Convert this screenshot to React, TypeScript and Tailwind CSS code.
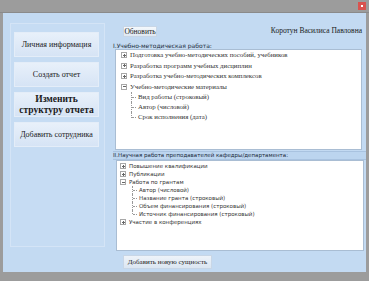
import React from 'react'

const serif = { fontFamily: '"Liberation Serif", "Times New Roman", serif' }
const sans = { fontFamily: '"DejaVu Sans", "Liberation Sans", sans-serif' }

const Expander = ({ open }: { open?: boolean }) => (
    <span className="w-[6px] h-[6px] border border-[#a8a8a8] bg-white flex items-center justify-center shrink-0 relative">
        <span className="absolute w-[3px] h-px bg-[#666]" />
        {!open && <span className="absolute w-px h-[3px] bg-[#666]" />}
    </span>
)

const Node = ({ label, open, h }: { label: string; open?: boolean; h: string }) => (
    <div className={`flex items-center gap-[3px] ${h}`}>
        <Expander open={open} />
        <span className="whitespace-nowrap">{label}</span>
    </div>
)

const Leaf = ({ label, h, last }: { label: string; h: string; last?: boolean }) => (
    <div className={`flex items-center ${h}`}>
        <span className={`w-px self-stretch border-l border-dotted border-[#999] ${last ? 'mb-[4px]' : ''}`} />
        <span className="w-[4px] border-t border-dotted border-[#999] mr-[2px]" />
        <span className="whitespace-nowrap">{label}</span>
    </div>
)

const SideButton = ({ children, big }: { children: React.ReactNode; big?: boolean }) => (
    <div
        className={`h-[25px] flex items-center justify-center text-center bg-gradient-to-b from-[#e8f0fa] to-[#d6e4f5] border border-[#e4edf8] text-[#1a1a1a] ${big ? 'text-[9.5px] font-bold leading-[11px]' : 'text-[8px]'}`}
        style={serif}
    >
        {children}
    </div>
)

const App = () => {
    return (
        <div className="w-[369px] h-[281px] bg-[#9c9c9c] flex flex-col overflow-hidden">
            {/* title bar */}
            <div className="h-[13px] flex justify-end items-start pr-[3px] pt-[2px] shrink-0 border-b border-[#8a8a8a]">
                <div className="w-[8px] h-[8px] bg-[#d9534f] flex items-center justify-center">
                    <span className="w-[2px] h-[2px] bg-white" />
                </div>
            </div>

            <div className="flex-1 flex ml-[3px] mr-[3px] mb-[9px] bg-[#c3daf2]">
                {/* left panel */}
                <div className="w-[95px] h-[224px] mt-[10px] ml-[7px] pl-[3px] pr-[5px] pt-[8px] bg-[#c6dcf3] border border-[#d4e4f6] flex flex-col gap-[5px] shrink-0">
                    <SideButton>Личная информация</SideButton>
                    <SideButton>Создать отчет</SideButton>
                    <SideButton big>Изменить<br />структуру отчета</SideButton>
                    <SideButton>Добавить сотрудника</SideButton>
                </div>

                {/* right side */}
                <div className="flex-1 flex flex-col ml-[8px] pt-[13px]">
                    <div className="flex items-start justify-between h-[16px]">
                        <div
                            className="ml-[10px] w-[34px] h-[11px] bg-gradient-to-b from-[#f4f8fc] to-[#dfe8f2] border border-[#c8d6e6] text-[7.5px] flex items-center justify-center text-[#1a1a1a]"
                            style={serif}
                        >
                            Обновить
                        </div>
                        <div className="text-[7.5px] text-[#1a1a1a] mr-[4px] -mt-[1px]" style={serif}>
                            Коротун Василиса Павловна
                        </div>
                    </div>
                    <div className="text-[6px] leading-[7px] h-[7px] text-[#1a2a3a]" style={sans}>
                        I.Учебно-методическая работа:
                    </div>
                    <div
                        className="ml-[2px] mr-[4px] h-[101px] bg-white border border-[#a9bdd3] pl-[5px] pt-0 text-[6.8px] text-[#333] overflow-hidden"
                        style={serif}
                    >
                        <Node h="h-[10.5px]" label="Подготовка учебно-методических пособий, учебников" />
                        <Node h="h-[10.5px]" label="Разработка программ учебных дисциплин" />
                        <Node h="h-[10.5px]" label="Разработка учебно-методических комплексов" />
                        <Node h="h-[10.5px]" open label="Учебно-методические материалы" />
                        <div className="pl-[10px]">
                            <Leaf h="h-[10px]" label="Вид работы (строковый)" />
                            <Leaf h="h-[10px]" label="Автор (числовой)" />
                            <Leaf h="h-[10px]" last label="Срок исполнения (дата)" />
                        </div>
                    </div>
                    <div
                        className="mt-[1px] h-[9px] border-y border-[#a9c3e0] bg-[#bcd5ef] text-[5.5px] leading-[7px] text-[#1a2a3a] whitespace-nowrap"
                        style={sans}
                    >
                        II.Научная работа преподавателей кафедры/департамента:
                    </div>
                    <div
                        className="ml-[3px] mr-[2px] h-[91px] bg-white border border-[#a9bdd3] pl-[3px] pt-[1px] text-[5.5px] text-[#333] overflow-hidden"
                        style={sans}
                    >
                        <Node h="h-[8px]" label="Повышение квалификации" />
                        <Node h="h-[8px]" label="Публикации" />
                        <Node h="h-[8px]" open label="Работа по грантам" />
                        <div className="pl-[12px]">
                            <Leaf h="h-[8px]" label="Автор (числовой)" />
                            <Leaf h="h-[8px]" label="Название гранта (строковый)" />
                            <Leaf h="h-[8px]" label="Объем финансирования (строковый)" />
                            <Leaf h="h-[8px]" last label="Источник финансирования (строковый)" />
                        </div>
                        <Node h="h-[8px]" label="Участие в конференциях" />
                    </div>
                    <div className="mt-[4px] ml-[10px]">
                        <div
                            className="w-[89px] h-[14px] bg-gradient-to-b from-[#eef3f9] to-[#dbe6f2] border border-[#c8d6e6] text-[7px] flex items-center justify-center text-[#1a1a1a]"
                            style={serif}
                        >
                            Добавить новую сущность
                        </div>
                    </div>
                </div>
            </div>
        </div>
    )
}

export default App
